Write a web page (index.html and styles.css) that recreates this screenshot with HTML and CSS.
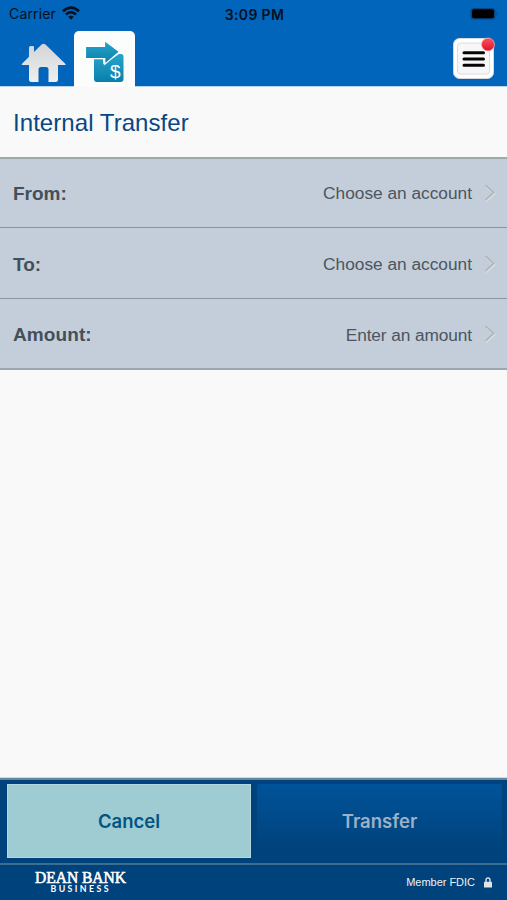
FILE: index.html
```html
<!DOCTYPE html>
<html lang="en">
<head>
<meta charset="utf-8">
<title>Internal Transfer</title>
<link rel="stylesheet" href="styles.css">
</head>
<body>
<header>
  <div class="status">
    <div class="carrier"><span>Carrier</span>
      <svg width="18" height="14" viewBox="0 0 18 14"><g fill="none" stroke="#05101c" stroke-width="2.6"><path d="M1 5.2Q9-2 17 5.2"/><path d="M4 8.4Q9 4 14 8.4"/></g><path d="M6.3 10.8Q9 8.6 11.7 10.8L9 13.7Z" fill="#05101c"/></svg>
    </div>
    <time>3:09 PM</time>
    <div class="battery"><svg width="32" height="14" viewBox="0 0 32 14"><rect x="1.5" y="1" width="25" height="11.5" rx="3.5" fill="#064783"/><rect x="3" y="2.3" width="22" height="9" rx="2" fill="#000"/><path d="M27.5 4.8Q29.5 6.8 27.5 8.8Z" fill="#064783"/></svg></div>
  </div>
  <nav>
    <svg class="home" width="46" height="42" viewBox="0 0 46 42"><defs><linearGradient id="silver" x2="0" y2="1"><stop stop-color="#d2d4d7"/><stop offset="1" stop-color="#efefef"/></linearGradient></defs><path d="M.8 21 8 13.8V4.5Q8 3 9.5 3H12Q13 3 13 4.2V9L20.6 1.6Q22.5-.2 24.5 1.6L44.5 21Q45 22 43.8 22H37V36.5Q37 39 34.5 39H27.5V26.5Q27.5 24 25 24H20Q17.5 24 17.5 26.5V39H10.5Q8 39 8 36.5V22H1.5Q.2 22 .8 21Z" fill="url(#silver)"/></svg>
    <div class="tab"><svg width="40" height="42" viewBox="0 0 40 42"><defs><linearGradient id="teal" x2="0" y2="1"><stop stop-color="#28a5cc"/><stop offset="1" stop-color="#087fab"/></linearGradient></defs><path d="M8 17H16.8L17.4 23.4 33 13H35.5Q37.5 13 37.5 15.5V38Q37.5 41 34.5 41H11Q8 41 8 38Z" fill="url(#teal)"/><path d="M-.5 5.3H18.5V-.4L33.5 10.8 18.8 23.2V17.7H-.5Z" fill="url(#teal)" stroke="#fff" stroke-width="1.2"/><text x="24" y="36.5">$</text></svg></div>
    <button class="menu" aria-label="Menu"><svg width="43" height="45" viewBox="0 0 43 45"><defs><linearGradient id="red" x2="0" y2="1"><stop stop-color="#ff5360"/><stop offset="1" stop-color="#dc142b"/></linearGradient></defs><rect x="1.5" y="3.5" width="40" height="40" rx="6" fill="#fff" stroke="#d3d9df" stroke-width="1"/><rect x="5.5" y="8" width="32" height="31" rx="3" fill="#f7f7f7" stroke="#ddd"/><path d="M12 17.7H31.5M12 24H31.5M12 30.3H31.5" stroke="#050505" stroke-width="3" stroke-linecap="round"/><circle cx="36" cy="9.5" r="6.5" fill="url(#red)" stroke="#efb7be" stroke-width=".7"/></svg></button>
  </nav>
</header>
<main>
  <h1>Internal Transfer</h1>
  <section class="rows">
    <div class="row"><b>From:</b><span>Choose an account</span><svg class="chevron" width="12" height="20" viewBox="0 0 12 20"><path d="M2 3.5 10.5 11 2 18.5" stroke="#dcdedf"/><path d="M1.5 2 9.5 9.5 1.5 17" stroke="#aeb3b8"/></svg></div>
    <div class="row"><b>To:</b><span>Choose an account</span><svg class="chevron" width="12" height="20" viewBox="0 0 12 20"><path d="M2 3.5 10.5 11 2 18.5" stroke="#dcdedf"/><path d="M1.5 2 9.5 9.5 1.5 17" stroke="#aeb3b8"/></svg></div>
    <div class="row"><b class="amount">Amount:</b><span class="enter">Enter an amount</span><svg class="chevron" width="12" height="20" viewBox="0 0 12 20"><path d="M2 3.5 10.5 11 2 18.5" stroke="#dcdedf"/><path d="M1.5 2 9.5 9.5 1.5 17" stroke="#aeb3b8"/></svg></div>
  </section>
</main>
<footer>
  <div class="actions"><button class="cancel">Cancel</button><button class="transfer">Transfer</button></div>
  <div class="brandbar">
    <svg class="logo" width="94" height="26" viewBox="0 0 94 26"><text class="bank" x="1" y="12.7" textLength="91" lengthAdjust="spacingAndGlyphs">DEAN BANK</text><text class="business" x="16.5" y="21.7" textLength="58">BUSINESS</text></svg>
    <div class="fdic">Member FDIC <svg width="8" height="11" viewBox="0 0 8 11"><path d="M2 5V3Q2 1 4 1T6 3V5" fill="none" stroke="#d9dee3" stroke-width="1.4"/><rect y="4.7" width="8" height="5.8" rx=".6" fill="#e1e4e7"/></svg></div>
  </div>
</footer>
</body>
</html>
```
FILE: styles.css
```css
* { box-sizing: border-box; }
body { margin: 0; height: 900px; display: flex; flex-direction: column; overflow: hidden; background: #f9f9f9; font-family: "Liberation Sans", Arial, sans-serif; }
button { padding: 0; border: 0; font: inherit; }
svg { display: block; flex-shrink: 0; }
header { height: 87px; background: #0065bb; border-bottom: 1px solid #b9d4e9; }
.status { height: 28px; display: grid; grid-template-columns: 1fr 1fr 1fr; align-items: center; padding: 0 6px 0 9px; font-family: Inter, sans-serif; color: #05101c; font-size: 14px; }
.carrier { display: flex; align-items: center; gap: 6px; }
.carrier span { letter-spacing: .15px; margin-top: -1px; }
.carrier svg { margin-top: -2px; }
time { text-align: center; font-size: 14px; font-weight: 600; letter-spacing: .35px; margin-left: -1px; white-space: nowrap; }
.battery { display: flex; justify-content: flex-end; }
nav { display: flex; height: 59px; padding: 0 12px 0 21px; }
.home { margin-top: 15px; }
.tab { width: 61px; height: 56px; margin: 3px 0 0 7px; padding: 10px 0 0 12px; background: #fbfcfc; border-radius: 5px 5px 0 0; }
.tab svg { overflow: visible; }
.tab text { font: 19px "Liberation Sans", sans-serif; fill: #fff; }
.menu { margin: 7px 0 0 auto; width: 43px; height: 45px; background: none; }
h1 { margin: 0; height: 70px; padding: 2px 13px 0; display: flex; align-items: center; color: #084783; font-size: 24px; font-weight: 400; letter-spacing: .06px; }
main { flex: 1; }
.rows { border-top: 2px solid #9eaaaa; border-bottom: 2px solid #9da7b0; background: #c3ceda; }
.row { height: 68px; display: flex; align-items: center; padding: 1px 11px 0 13px; color: #4c5560; font-size: 17.3px; }
.row + .row { height: 71px; padding-top: 3px; border-top: 1px solid #8695a1; }
.row:last-child { height: 70px; }
.row b { font-size: 19px; margin-right: auto; color: #444f5a; }
.amount { letter-spacing: .1px; }
.enter { letter-spacing: -.1px; }
.chevron { margin: -2px 0 0 12px; fill: none; stroke-width: 1.5; }
footer { height: 122px; background: #00427b; border-top: 2px solid #65879f; box-shadow: 0 -1px #d2d9de; }
.actions { height: 83px; padding: 4px 5px 5px 7px; display: grid; grid-template-columns: 244px 1fr; gap: 6px; font-family: Inter, sans-serif; font-size: 18.5px; font-weight: 600; }
.cancel { height: 74px; background: #9fcbd2; border: 1px solid #b3d8dc; color: #045482; }
.transfer { height: 74px; background: linear-gradient(#00539a, #00427b 90%); color: #9cb1c7; border-radius: 2px; }
.brandbar { height: 37px; border-top: 2px solid #3d6c93; display: flex; justify-content: space-between; padding: 5px 15px 0 34px; color: #eef2f5; }
.bank { font: 400 16px "Liberation Serif", serif; fill: #fff; stroke: #fff; stroke-width: .6px; }
.business { font: 700 8.8px Lato, sans-serif; fill: #fff; }
.fdic { display: flex; align-items: center; gap: 9px; height: 24px; font-size: 11px; letter-spacing: -.02px; white-space: nowrap; }
```
